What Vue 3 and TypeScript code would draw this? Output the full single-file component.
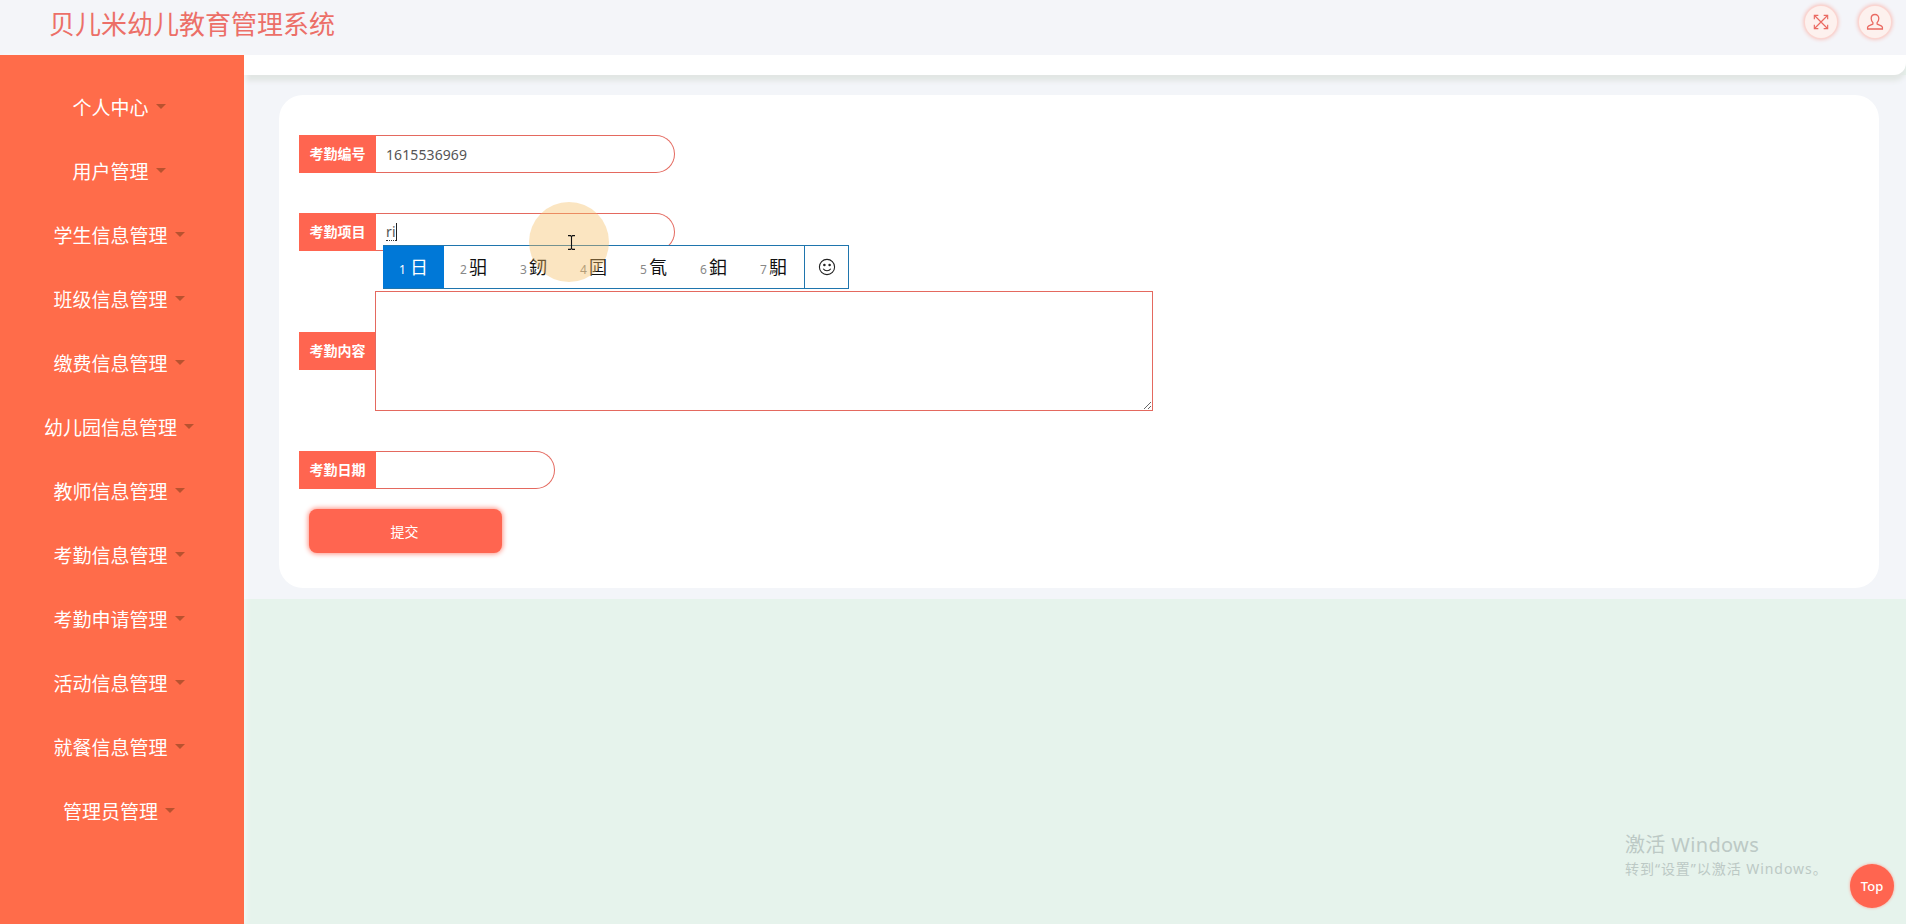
<script setup lang="ts">
// Sidebar menu
const menus: string[] = [
  '个人中心',
  '用户管理',
  '学生信息管理',
  '班级信息管理',
  '缴费信息管理',
  '幼儿园信息管理',
  '教师信息管理',
  '考勤信息管理',
  '考勤申请管理',
  '活动信息管理',
  '就餐信息管理',
  '管理员管理',
]

// IME candidates
const candidates: string[] = ['日', '驲', '釰', '囸', '氜', '鈤', '馹']
</script>

<template>
  <div class="page">
    <header class="topbar">
      <h1 class="title">贝儿米幼儿教育管理系统</h1>
      <div class="top-actions">
        <span class="round-btn">
          <svg width="16" height="16" viewBox="0 0 18 18" fill="none" stroke="#ea6a62" stroke-width="1.3">
            <path d="M2 2 16 16M16 2 2 16" />
            <path d="M1.5 6V1.500H6M12 1.500h4.500V6M16.500 12v4.500H12M6 16.500H1.500V12" />
          </svg>
        </span>
        <span class="round-btn">
          <svg width="18" height="18" viewBox="0 0 18 18" fill="none" stroke="#ea6a62" stroke-width="1.3">
            <path d="M9 1.500c-2.400 0-3.800 1.800-3.800 4 0 1.800.8 3.200 1.700 4.100v1.300c-1 .9-4.900 1.400-5.300 3.200v1.900h14.800v-1.900c-.4-1.800-4.300-2.300-5.300-3.200V9.600c.9-.9 1.700-2.300 1.700-4.100 0-2.200-1.400-4-3.800-4Z" />
          </svg>
        </span>
      </div>
    </header>

    <div class="body">
      <aside class="sidebar">
        <a v-for="menu in menus" :key="menu" class="menu-item">
          <span>{{ menu }}</span>
          <i class="caret"></i>
        </a>
      </aside>

      <main class="main">
        <div class="crumb-bar"></div>
        <section class="content">
          <form class="card" @submit.prevent>
            <div class="row">
              <label class="row-label">考勤编号</label>
              <input class="pill" value="1615536969" />
            </div>
            <div class="row">
              <label class="row-label">考勤项目</label>
              <div class="pill pill-typing"><span class="typing">ri</span><i class="text-caret"></i></div>
            </div>
            <div class="row">
              <label class="row-label">考勤内容</label>
              <textarea class="area"></textarea>
            </div>
            <div class="row row-date">
              <label class="row-label">考勤日期</label>
              <input class="pill pill-short" />
            </div>
            <button class="submit" type="submit">提交</button>
          </form>
        </section>
      </main>
    </div>

    <!-- IME candidate window -->
    <div class="ime">
      <div
        v-for="(word, index) in candidates"
        :key="word"
        :class="['ime-cell', { active: index === 0 }]"
      >
        <small>{{ index + 1 }}</small>{{ word }}
      </div>
      <div class="ime-emoji">
        <svg width="18" height="18" viewBox="0 0 18 18" fill="none" stroke="#222" stroke-width="1.1">
          <circle cx="9" cy="9" r="7.6" />
          <circle cx="6.4" cy="7" r=".7" fill="#222" />
          <circle cx="11.6" cy="7" r=".7" fill="#222" />
          <path d="M5.2 10.800c1.800 2.600 5.800 2.600 7.600 0" />
        </svg>
      </div>
    </div>

    <!-- Mouse highlight -->
    <div class="halo"></div>
    <svg class="ibeam" width="9" height="15" viewBox="0 0 9 15" fill="none" stroke="#111" stroke-width="1.1">
      <path d="M1 .6h2.500l1 1 1-1H8M4.500 1.600v11.800M1 14.400h2.500l1-1 1 1H8" />
    </svg>

    <div class="watermark">
      <div class="wm-title">激活 Windows</div>
      <div class="wm-sub">转到“设置”以激活 Windows。</div>
    </div>

    <div class="to-top">Top</div>
  </div>
</template>

<style>
html,
body {
  margin: 0;
  overflow: hidden;
}
</style>

<style scoped>
.page {
  height: 100vh;
  display: flex;
  flex-direction: column;
  background: #e6f3ec;
  font-family: "Noto Sans", "Noto Sans CJK SC", sans-serif;
  overflow: hidden;
}

.topbar {
  height: 55px;
  flex: none;
  display: flex;
  align-items: center;
  justify-content: space-between;
  padding: 0 14px 10px 49px;
  box-sizing: border-box;
  background: #f4f5f9;
}

.title {
  margin: 0;
  font-family: "Noto Sans CJK SC", sans-serif;
  font-size: 26px;
  font-weight: 400;
  color: #ec6f68;
}

.top-actions {
  display: flex;
  gap: 22px;
  margin-top: -1px;
  margin-right: 1px;
}

.round-btn {
  width: 32px;
  height: 32px;
  border-radius: 50%;
  display: flex;
  align-items: center;
  justify-content: center;
  background: #fdf1ee;
  box-shadow: 0 0 0 1px #fbd6d1, 0 0 4px 1px #f8b3ab;
}

.body {
  flex: 1;
  display: flex;
  min-height: 0;
}

.sidebar {
  width: 244px;
  flex: none;
  padding: 20px 6px 0 0;
  box-sizing: border-box;
  background: #ff6c4a;
  box-shadow: 2px 0 6px rgba(255, 255, 255, 0.6);
  position: relative;
  z-index: 1;
}

.menu-item {
  height: 64px;
  display: flex;
  align-items: center;
  justify-content: center;
  gap: 7px;
  color: #fff;
  font-family: "Noto Sans CJK SC", sans-serif;
  font-size: 19px;
  line-height: 64px;
}

.caret {
  width: 0;
  height: 0;
  margin-top: -2px;
  border-left: 5px solid transparent;
  border-right: 5px solid transparent;
  border-top: 5px solid #b9522f;
}

.main {
  flex: 1;
  min-width: 0;
}

.crumb-bar {
  height: 20px;
  background: #fff;
  border-bottom-right-radius: 12px;
  box-shadow: 0 6px 5px #e2e6e4;
  position: relative;
}

.content {
  padding: 20px 27px 11px 35px;
  background: #f3f5f9;
}

.card {
  height: 493px;
  padding: 40px 20px 0;
  box-sizing: border-box;
  background: #fff;
  border-radius: 24px;
}

.row {
  display: flex;
  align-items: center;
  margin-bottom: 40px;
}

.row-date {
  margin-bottom: 20px;
}

.row-label {
  width: 77px;
  height: 38px;
  flex: none;
  background: #ff6550;
  color: #fff;
  font-family: "Noto Sans CJK SC", sans-serif;
  font-size: 14px;
  font-weight: 700;
  line-height: 37px;
  text-align: center;
}

.pill {
  width: 299px;
  height: 38px;
  padding: 0 10px;
  box-sizing: border-box;
  border: 1px solid #e4695f;
  border-left: none;
  border-radius: 0 19px 19px 0;
  outline: none;
  background: #fff;
  color: #555;
  font-family: "Noto Sans", sans-serif;
  font-size: 14px;
  letter-spacing: 0.1px;
}

.pill-typing {
  display: flex;
  align-items: center;
}

.pill-short {
  width: 179px;
}

.typing {
  border-bottom: 1px dotted #333;
  line-height: 17px;
}

.text-caret {
  width: 1px;
  height: 18px;
  background: #222;
}

.area {
  width: 778px;
  height: 120px;
  margin-left: -1px;
  padding: 4px;
  box-sizing: border-box;
  border: 1px solid #e4695f;
  outline: none;
  background: #fff;
  display: block;
}

.submit {
  width: 193px;
  height: 44px;
  margin-left: 10px;
  border: none;
  border-radius: 8px;
  background: #ff6550;
  box-shadow: 0 0 5px 1px #ff9284;
  color: #fff;
  font-family: "Noto Sans CJK SC", sans-serif;
  font-size: 14px;
  line-height: 42px;
  padding: 0 2px 0 0;
}

.ime {
  position: absolute;
  left: 383px;
  top: 245px;
  height: 44px;
  display: flex;
  box-sizing: border-box;
  border: 1px solid #1f75ad;
  border-left: none;
  background: #fff;
  font-family: "Noto Sans CJK SC", sans-serif;
  font-size: 18px;
  line-height: 41px;
  color: #111;
}

.ime-cell {
  width: 60px;
  box-sizing: border-box;
  padding-left: 16px;
  white-space: nowrap;
}

.ime-cell small {
  margin-right: 2px;
  font-family: "Noto Sans", sans-serif;
  font-size: 12px;
  color: #888;
}

.ime-cell.active {
  width: 61px;
  background: #0078d7;
  color: #fff;
}

.ime-cell.active small {
  margin-right: 4px;
  color: #fff;
}

.ime-emoji {
  width: 43px;
  display: flex;
  align-items: center;
  justify-content: center;
  border-left: 1px solid #1f75ad;
}

.halo {
  position: absolute;
  left: 529px;
  top: 202px;
  width: 80px;
  height: 80px;
  border-radius: 50%;
  background: rgba(245, 190, 100, 0.4);
}

.ibeam {
  position: absolute;
  left: 567px;
  top: 235px;
}

.watermark {
  position: absolute;
  left: 1625px;
  top: 831px;
  color: #bcc9c5;
  font-family: "Noto Sans", "Noto Sans CJK SC", sans-serif;
}

.wm-title {
  font-size: 20px;
  line-height: 28px;
  letter-spacing: 0.35px;
}

.wm-sub {
  font-size: 14px;
  line-height: 20px;
  letter-spacing: 0.95px;
}

.to-top {
  position: absolute;
  left: 1850px;
  top: 864px;
  width: 44px;
  height: 44px;
  border-radius: 50%;
  background: #ff6550;
  box-shadow: 0 0 3px #ff9c8f;
  color: #fff;
  font-size: 13px;
  font-weight: 500;
  line-height: 44px;
  text-align: center;
}
</style>
